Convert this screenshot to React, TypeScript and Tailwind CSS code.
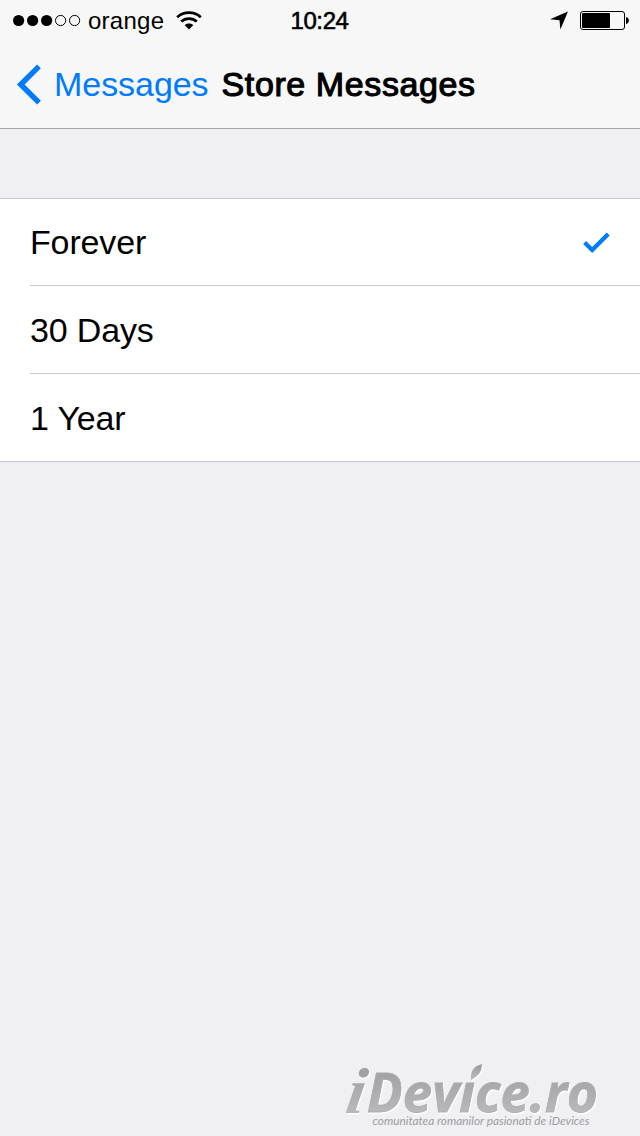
import React, { useState } from "react";
import clsx from "clsx";

interface IOption {
  id: string;
  label: string;
}

const options: Array<IOption> = [
  { id: "forever", label: "Forever" },
  { id: "30days", label: "30 Days" },
  { id: "1year", label: "1 Year" },
];

const StatusBar: React.FC = () => {
  return (
    <div className="flex h-10 items-center justify-between pl-[13px] pr-[11px] pt-px text-[24px] leading-[29px]">
      <div className="flex w-[276px] items-center">
        <svg width="68" height="13" viewBox="0 0 68 13">
          {[0, 1, 2].map((i) => (
            <circle key={i} cx={5.6 + i * 14} cy="6.5" r="5.6" />
          ))}
          {[3, 4].map((i) => (
            <circle key={i} cx={5.6 + i * 14} cy="6.5" r="5.1" fill="none" stroke="black" />
          ))}
        </svg>
        <span className="ml-[7px] tracking-[0.25px]">orange</span>
        <svg className="ml-3" width="26" height="19" viewBox="0 0 26 19">
          <g fill="none" stroke="black" strokeWidth="2.7">
            <path d="M1.2 6.2C7.8 0.2 18.2 0.2 24.8 6.2" />
            <path d="M5.2 10.6C9.6 6.5 16.4 6.5 20.8 10.6" />
          </g>
          <path d="M8.6 14.1C11 11.9 15 11.9 17.4 14.1L13 18.5Z" />
        </svg>
      </div>
      <span className="tracking-[-0.4px] [-webkit-text-stroke:0.6px_black]">10:24</span>
      <div className="flex w-[279px] items-center justify-end">
        <svg width="18" height="19" viewBox="0 0 18 19">
          <path d="M18 0.5L0 8.2L9.5 9.3L10.4 18.6Z" />
        </svg>
        <svg className="ml-3" width="49" height="19" viewBox="0 0 49 19">
          <rect x="0.5" y="0.5" width="44" height="18" rx="2.5" fill="none" stroke="black" />
          <rect x="2" y="2" width="28" height="15" rx="1" />
          <path d="M46 6C49.8 6.5 49.8 12.5 46 13Z" />
        </svg>
      </div>
    </div>
  );
};

const Header: React.FC = () => {
  return (
    <header className="h-[129px] border-b border-[#a7a7aa] bg-[#f7f7f7]">
      <StatusBar />
      <div className="flex h-[88px] items-center pl-[17px] text-[34px] leading-[40px]">
        <button className="flex items-center text-[#007aff]">
          <svg width="24" height="40" viewBox="0 0 24 40" className="overflow-visible">
            <path d="M22 2.4L3.7 20.5L22 38.6" fill="none" stroke="currentColor" strokeWidth="5.4" />
          </svg>
          <span className="ml-[13px] tracking-[-0.05px]">Messages</span>
        </button>
        <h1 className="ml-[13px] tracking-[0.6px] [-webkit-text-stroke:1.1px_black]">
          Store Messages
        </h1>
      </div>
    </header>
  );
};

const Watermark: React.FC = () => {
  return (
    <svg className="ml-[338px] overflow-visible" width="270" height="84" viewBox="0 -10 270 84">
      <defs>
        <linearGradient id="metal" x1="0" y1="0" x2="0" y2="1">
          <stop offset="0.2" stopColor="#a0a0a2" />
          <stop offset="0.8" stopColor="#b9b9bb" />
        </linearGradient>
        <filter id="emboss" x="-5%" y="-10%" width="110%" height="120%">
          <feDropShadow dx="1" dy="1.5" stdDeviation="0.6" floodColor="#ffffff" floodOpacity="0.9" />
        </filter>
      </defs>
      <g fill="url(#metal)" filter="url(#emboss)">
        <text
          x="6"
          y="0"
          transform="translate(0 51) skewX(-9)"
          fontSize="65"
          textLength="19"
          lengthAdjust="spacingAndGlyphs"
          className="font-['Liberation_Serif',serif] font-bold italic"
        >
          i
        </text>
        <text
          x="29"
          y="50"
          fontSize="53"
          textLength="231"
          lengthAdjust="spacingAndGlyphs"
          stroke="#adadaf"
          strokeWidth="0.8"
          className="font-['Open_Sans','Noto_Sans',sans-serif] font-bold italic"
        >
          Devıce.ro
        </text>
        <path d="M133 18C132 9 136 4 144 2C144 9 141 14 133 18Z" />
      </g>
      <text
        x="34.5"
        y="63"
        fontSize="12"
        fill="#9d9da0"
        textLength="217"
        lengthAdjust="spacingAndGlyphs"
        className="font-[Lato,sans-serif] font-normal italic"
      >
        comunitatea romanilor pasionati de iDevices
      </text>
    </svg>
  );
};

export default function App() {
  const [selected, setSelected] = useState<string>("forever");

  return (
    <div className="flex h-[1136px] w-[640px] flex-col overflow-hidden bg-[#efeff4] font-['Liberation_Sans',Arial,sans-serif] text-black">
      <Header />

      <ul className="mt-[69px] border-y border-[#c8c7cc] bg-white pl-[30px]">
        {options.map((option, index) => (
          <li
            key={option.id}
            onClick={() => setSelected(option.id)}
            className={clsx(
              "flex items-center justify-between border-[#c8c7cc] pr-[30px] text-[34px] leading-[40px] tracking-[-0.15px]",
              index === 1 ? "h-[88px]" : "h-[87px]",
              index < options.length - 1 && "border-b"
            )}
          >
            <span>{option.label}</span>
            {selected === option.id && (
              <svg width="27" height="21" viewBox="0 0 27 21">
                <path d="M1.6 10.6L9.2 18L25.2 2" fill="none" stroke="#007aff" strokeWidth="4.2" />
              </svg>
            )}
          </li>
        ))}
      </ul>

      <footer className="mt-auto">
        <Watermark />
      </footer>
    </div>
  );
}
